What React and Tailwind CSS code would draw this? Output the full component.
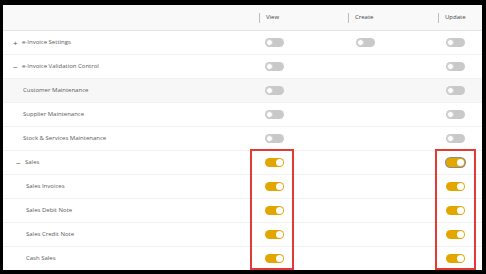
import React from 'react';

const rows = [
  { label: 'e-Invoice Settings', icon: '+', indent: 'pl-[10px]', view: false, create: false, update: false },
  { label: 'e-Invoice Validation Control', icon: '−', indent: 'pl-[10px]', view: false, update: false },
  { label: 'Customer Maintenance', indent: 'pl-[20px]', view: false, update: false, shaded: true },
  { label: 'Supplier Maintenance', indent: 'pl-[20px]', view: false, update: false },
  { label: 'Stock & Services Maintenance', indent: 'pl-[20px]', view: false, update: false },
  { label: 'Sales', icon: '−', indent: 'pl-[13px]', view: true, update: true, focus: true },
  { label: 'Sales Invoices', indent: 'pl-[23px]', view: true, update: true },
  { label: 'Sales Debit Note', indent: 'pl-[23px]', view: true, update: true },
  { label: 'Sales Credit Note', indent: 'pl-[23px]', view: true, update: true },
  { label: 'Cash Sales', indent: 'pl-[23px]', view: true, update: true },
];

const Toggle = ({ on, focus }) => (
  <div
    className={
      'w-[19px] h-[9px] rounded-full flex items-center px-[1px] ' +
      (on ? 'bg-[#e3a600] justify-end ' : 'bg-[#c9c9c9] justify-start ') +
      (focus ? 'ring-1 ring-[#8a8a8a]' : '')
    }
  >
    <div className={'w-[7px] h-[7px] rounded-full bg-white ' + (on ? '' : 'border border-[#d0d0d0]')} />
  </div>
);

const grid = 'grid grid-cols-[256px_89px_90px_44px]';

export default function App() {
  return (
    <div
      className="w-[486px] h-[274px] bg-black pt-[5px] pl-[3px] pr-[4px] pb-[4px]"
      style={{ fontFamily: '"Open Sans", "Noto Sans", sans-serif' }}
    >
      <div className="relative w-full h-full overflow-hidden bg-white flex flex-col text-[6px] text-[#5a5a5a]">
        <div className={grid + ' h-[26px] shrink-0 items-center bg-[#f9f9f9] border-b border-[#e3e3e3]'}>
          <div />
          {['View', 'Create', 'Update'].map((h) => (
            <div key={h} className="flex items-center h-[10px] border-l border-[#bdbdbd] pl-[6px] text-[#444]">
              {h}
            </div>
          ))}
        </div>
        {rows.map((r) => (
          <div
            key={r.label}
            className={grid + ' h-[24px] shrink-0 items-center border-b border-[#f1f1f1] ' + (r.shaded ? 'bg-[#f7f7f7]' : '')}
          >
            <div className={'flex items-center ' + r.indent}>
              {r.icon && <span className="w-[9px] text-[8px] leading-none text-[#555]">{r.icon}</span>}
              <span>{r.label}</span>
            </div>
            <div className="pl-[6px]">
              <Toggle on={r.view} />
            </div>
            <div className="pl-[8px]">{r.create !== undefined && <Toggle on={r.create} />}</div>
            <div className="pl-[8px]">
              <Toggle on={r.update} focus={r.focus} />
            </div>
          </div>
        ))}
        <div className="absolute left-[247px] top-[144px] w-[44px] h-[121px] border-2 border-[#e53935]" />
        <div className="absolute left-[432px] top-[144px] w-[41px] h-[121px] border-2 border-[#e53935]" />
      </div>
    </div>
  );
}
